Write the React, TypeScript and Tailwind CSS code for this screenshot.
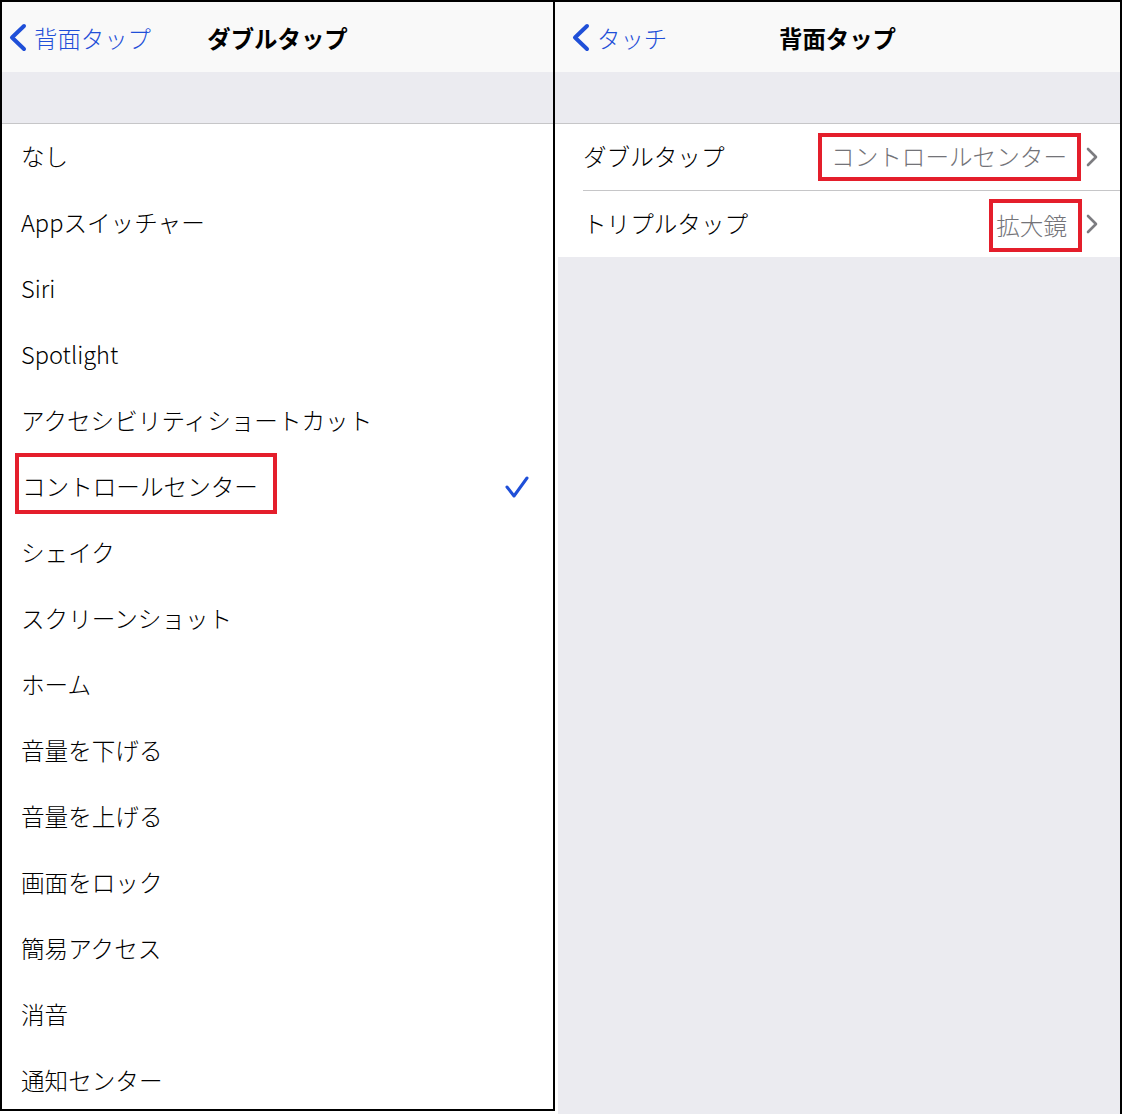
import React from "react";

const LEFT_ITEMS = [
  "なし",
  "Appスイッチャー",
  "Siri",
  "Spotlight",
  "アクセシビリティショートカット",
  "コントロールセンター",
  "シェイク",
  "スクリーンショット",
  "ホーム",
  "音量を下げる",
  "音量を上げる",
  "画面をロック",
  "簡易アクセス",
  "消音",
  "通知センター",
];

const SELECTED = "コントロールセンター";

function BackChevron() {
  return (
    <svg width="20" height="30" viewBox="0 0 20 30" className="shrink-0">
      <polyline
        points="16,3 4,14.5 16,26"
        fill="none"
        stroke="#1f4fd8"
        strokeWidth="4"
        strokeLinecap="round"
        strokeLinejoin="round"
      />
    </svg>
  );
}

function Check() {
  return (
    <svg width="24" height="22" viewBox="0 0 24 22" className="shrink-0">
      <polyline
        points="2,11 9,20 22,2"
        fill="none"
        stroke="#1f4fd8"
        strokeWidth="3"
        strokeLinecap="round"
        strokeLinejoin="round"
      />
    </svg>
  );
}

function RowChevron() {
  return (
    <svg width="12" height="20" viewBox="0 0 12 20" className="shrink-0">
      <polyline
        points="2,2 10,10 2,18"
        fill="none"
        stroke="#7c7c80"
        strokeWidth="2.6"
        strokeLinecap="round"
        strokeLinejoin="round"
      />
    </svg>
  );
}

function Header({ back, title, padLeft }: { back: string; title: string; padLeft: string }) {
  return (
    <div className="grid h-[70px] shrink-0 grid-cols-[1fr_auto_1fr] items-center bg-[#f9f9f9] pt-[3px]">
      <div className={`flex items-center gap-[6px] ${padLeft}`}>
        <BackChevron />
        <span className="text-[23.4px] font-light text-[#1f4fd8]">{back}</span>
      </div>
      <div className="text-[23.4px] font-bold text-black">{title}</div>
      <div />
    </div>
  );
}

function LeftPanel() {
  return (
    <div className="flex h-[1111px] w-[555px] shrink-0 flex-col overflow-hidden border-2 border-black">
      <Header back="背面タップ" title="ダブルタップ" padLeft="pl-[6px]" />
      <div className="h-[52px] shrink-0 border-b border-[#c6c6c8] bg-[#ebebf0]" />
      <div className="flex flex-col bg-white font-light">
        {LEFT_ITEMS.map((item) => (
          <div
            key={item}
            className="flex h-[66px] shrink-0 items-center justify-between pl-[19px] pr-[24px] text-[23.6px] text-black"
          >
            {item === SELECTED ? (
              <span className="-ml-[6px] -mt-[7px] inline-flex h-[61px] items-center border-4 border-[#e41e2b] pl-[3px] pr-[15px] pt-[7px]">
                {item}
              </span>
            ) : (
              <span>{item}</span>
            )}
            {item === SELECTED && <Check />}
          </div>
        ))}
      </div>
    </div>
  );
}

function RightPanel() {
  return (
    <div className="flex h-[1114px] w-[567px] shrink-0 flex-col border-r-2 border-t-2 border-black">
      <Header back="タッチ" title="背面タップ" padLeft="pl-[16px]" />
      <div className="h-[52px] shrink-0 border-b border-[#c6c6c8] bg-[#ebebf0]" />
      <div className="flex flex-col bg-white text-[23.6px] font-light">
        <div className="flex h-[66px] items-center pl-[28px] pr-[22px]">
          <span className="flex-1 text-black">ダブルタップ</span>
          <span className="mr-[5px] inline-flex h-[48px] items-center border-4 border-[#e41e2b] pl-[9px] pr-[10px] text-[#737378]">
            コントロールセンター
          </span>
          <RowChevron />
        </div>
        <div className="ml-[28px] h-px bg-[#c6c6c8]" />
        <div className="flex h-[66px] items-center pl-[28px] pr-[22px]">
          <span className="flex-1 text-black">トリプルタップ</span>
          <span className="mr-[4px] mt-[3px] inline-flex h-[53px] items-center border-4 border-[#e41e2b] pl-[3px] pr-[11px] text-[#737378]">
            拡大鏡
          </span>
          <RowChevron />
        </div>
      </div>
      <div className="flex-1 border-l-[3px] border-white bg-[#ebebf0]" />
    </div>
  );
}

export default function App() {
  return (
    <div
      className="flex h-[1114px] w-[1123px] overflow-hidden bg-white"
      style={{ fontFamily: '"Noto Sans CJK JP", "Noto Sans", sans-serif' }}
    >
      <LeftPanel />
      <RightPanel />
    </div>
  );
}
